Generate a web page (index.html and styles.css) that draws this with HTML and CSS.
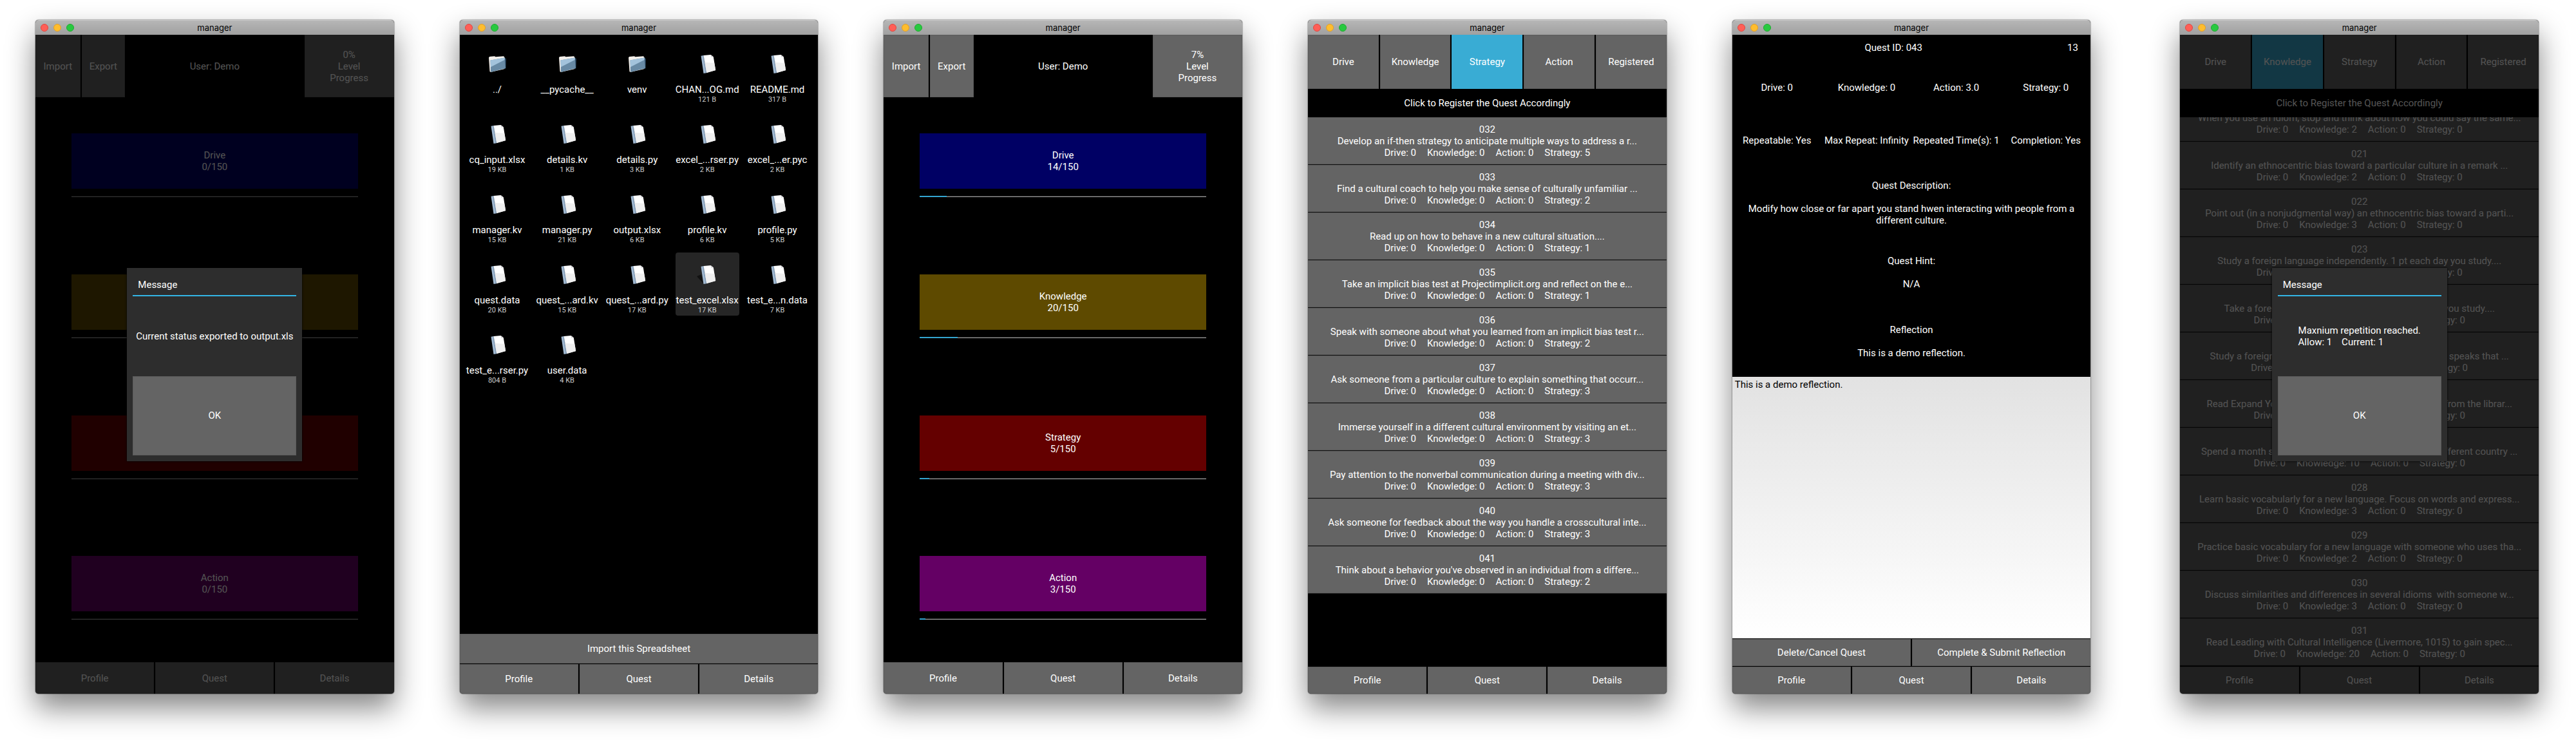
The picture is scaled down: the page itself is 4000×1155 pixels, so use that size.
FILE: index.html
```html
<!DOCTYPE html>
<html lang="en">
<head>
<meta charset="utf-8">
<title>manager</title>
<link rel="stylesheet" href="styles.css">
</head>
<body>
<svg width="0" height="0" class="sprites" aria-hidden="true">
  <symbol id="folder" viewBox="0 0 48 48">
    <path d="M11 14.5 12 13 20 12.2 21.5 13.2 34 12.2 35.5 14V32L14 37 12.5 36Z" fill="#f3efea"/>
    <path d="M34.5 14.5 38 16 37.5 31 34.5 32Z" fill="#24405a"/>
    <path d="M13.5 18.5 36 14.5 37 31 14 37Z" fill="#688aa5"/>
    <path d="M13.5 18.5 36 14.5 35.5 18 14 29Z" fill="#a3c3dc"/>
  </symbol>
  <symbol id="file" viewBox="0 0 48 48">
    <path d="M14.5 11.7 18.5 11 23.3 38 18.5 39Z" fill="#a3bbd3"/>
    <path d="M17 11.3 18.5 11 23.3 38 21.5 38.4Z" fill="#7f99b5"/>
    <path d="M18.5 11 29.5 10 33.8 13.3 37.2 34 23.3 38Z" fill="#fff"/>
    <path d="M20.4 21.7 35.2 23 37.2 34 23.3 38Z" fill="#efefef"/>
    <path d="M29.5 10 30.2 13.8 33.8 13.3Z" fill="#d5d5d8"/>
  </symbol>
</svg>
<main class="screens">

  <section class="window">
    <header class="titlebar"><span class="lights"><i></i><i></i><i></i></span><h1>manager</h1></header>
    <div class="body home">
      <div class="topbar">
        <button>Import</button>
        <button>Export</button>
        <p>User: Demo</p>
        <button>0%<br>Level<br>Progress</button>
      </div>
      <div class="meters">
        <div class="meter"><button class="drive">Drive<br>0/150</button><progress max="150" value="0" aria-label="Drive"></progress></div>
        <div class="meter"><button class="knowledge" aria-label="Knowledge 0/150"></button><progress max="150" value="0" aria-label="Knowledge"></progress></div>
        <div class="meter"><button class="strategy" aria-label="Strategy 0/150"></button><progress max="150" value="0" aria-label="Strategy"></progress></div>
        <div class="meter"><button class="action">Action<br>0/150</button><progress max="150" value="0" aria-label="Action"></progress></div>
      </div>
      <nav class="bar bar-tall"><button>Profile</button><button>Quest</button><button>Details</button></nav>
      <div class="overlay">
        <div class="dialog" role="dialog" aria-label="Message">
          <h2>Message</h2>
          <p>Current status exported to output.xls</p>
          <button>OK</button>
        </div>
      </div>
    </div>
  </section>

  <section class="window">
    <header class="titlebar"><span class="lights"><i></i><i></i><i></i></span><h1>manager</h1></header>
    <div class="body">
      <ul class="files">
        <li><svg><use href="#folder"/></svg><b>../</b></li>
        <li><svg><use href="#folder"/></svg><b>__pycache__</b></li>
        <li><svg><use href="#folder"/></svg><b>venv</b></li>
        <li><svg><use href="#file"/></svg><b>CHAN...OG.md</b><small>121 B</small></li>
        <li><svg><use href="#file"/></svg><b>README.md</b><small>317 B</small></li>
        <li><svg><use href="#file"/></svg><b>cq_input.xlsx</b><small>19 KB</small></li>
        <li><svg><use href="#file"/></svg><b>details.kv</b><small>1 KB</small></li>
        <li><svg><use href="#file"/></svg><b>details.py</b><small>3 KB</small></li>
        <li><svg><use href="#file"/></svg><b>excel_...rser.py</b><small>2 KB</small></li>
        <li><svg><use href="#file"/></svg><b>excel_...er.pyc</b><small>2 KB</small></li>
        <li><svg><use href="#file"/></svg><b>manager.kv</b><small>15 KB</small></li>
        <li><svg><use href="#file"/></svg><b>manager.py</b><small>21 KB</small></li>
        <li><svg><use href="#file"/></svg><b>output.xlsx</b><small>6 KB</small></li>
        <li><svg><use href="#file"/></svg><b>profile.kv</b><small>6 KB</small></li>
        <li><svg><use href="#file"/></svg><b>profile.py</b><small>5 KB</small></li>
        <li><svg><use href="#file"/></svg><b>quest.data</b><small>20 KB</small></li>
        <li><svg><use href="#file"/></svg><b>quest_...ard.kv</b><small>15 KB</small></li>
        <li><svg><use href="#file"/></svg><b>quest_...ard.py</b><small>17 KB</small></li>
        <li class="selected"><svg><path d="M8 27 15 24 18 38Z" fill="#111"/><use href="#file"/></svg><b>test_excel.xlsx</b><small>17 KB</small></li>
        <li><svg><use href="#file"/></svg><b>test_e...n.data</b><small>7 KB</small></li>
        <li><svg><use href="#file"/></svg><b>test_e...rser.py</b><small>804 B</small></li>
        <li><svg><use href="#file"/></svg><b>user.data</b><small>4 KB</small></li>
      </ul>
      <div class="bar bar-mid"><button>Import this Spreadsheet</button></div>
      <nav class="bar bar-mid"><button>Profile</button><button>Quest</button><button>Details</button></nav>
    </div>
  </section>

  <section class="window">
    <header class="titlebar"><span class="lights"><i></i><i></i><i></i></span><h1>manager</h1></header>
    <div class="body home">
      <div class="topbar">
        <button>Import</button>
        <button>Export</button>
        <p>User: Demo</p>
        <button>7%<br>Level<br>Progress</button>
      </div>
      <div class="meters">
        <div class="meter"><button class="drive">Drive<br>14/150</button><progress max="150" value="14" aria-label="Drive"></progress></div>
        <div class="meter"><button class="knowledge">Knowledge<br>20/150</button><progress max="150" value="20" aria-label="Knowledge"></progress></div>
        <div class="meter"><button class="strategy">Strategy<br>5/150</button><progress max="150" value="5" aria-label="Strategy"></progress></div>
        <div class="meter"><button class="action">Action<br>3/150</button><progress max="150" value="3" aria-label="Action"></progress></div>
      </div>
      <nav class="bar bar-tall"><button>Profile</button><button>Quest</button><button>Details</button></nav>
    </div>
  </section>

  <section class="window">
    <header class="titlebar"><span class="lights"><i></i><i></i><i></i></span><h1>manager</h1></header>
    <div class="body">
      <div class="bar tabs"><button>Drive</button><button>Knowledge</button><button class="active">Strategy</button><button>Action</button><button>Registered</button></div>
      <p class="prompt">Click to Register the Quest Accordingly</p>
      <div class="quests">
        <button><span>032</span><span>Develop an if-then strategy to anticipate multiple ways to address a r...</span><span class="points"><i>Drive: 0</i><i>Knowledge: 0</i><i>Action: 0</i><i>Strategy: 5</i></span></button>
        <button><span>033</span><span>Find a cultural coach to help you make sense of culturally unfamiliar ...</span><span class="points"><i>Drive: 0</i><i>Knowledge: 0</i><i>Action: 0</i><i>Strategy: 2</i></span></button>
        <button><span>034</span><span>Read up on how to behave in a new cultural situation....</span><span class="points"><i>Drive: 0</i><i>Knowledge: 0</i><i>Action: 0</i><i>Strategy: 1</i></span></button>
        <button><span>035</span><span>Take an implicit bias test at Projectimplicit.org and reflect on the e...</span><span class="points"><i>Drive: 0</i><i>Knowledge: 0</i><i>Action: 0</i><i>Strategy: 1</i></span></button>
        <button><span>036</span><span>Speak with someone about what you learned from an implicit bias test r...</span><span class="points"><i>Drive: 0</i><i>Knowledge: 0</i><i>Action: 0</i><i>Strategy: 2</i></span></button>
        <button><span>037</span><span>Ask someone from a particular culture to explain something that occurr...</span><span class="points"><i>Drive: 0</i><i>Knowledge: 0</i><i>Action: 0</i><i>Strategy: 3</i></span></button>
        <button><span>038</span><span>Immerse yourself in a different cultural environment by visiting an et...</span><span class="points"><i>Drive: 0</i><i>Knowledge: 0</i><i>Action: 0</i><i>Strategy: 3</i></span></button>
        <button><span>039</span><span>Pay attention to the nonverbal communication during a meeting with div...</span><span class="points"><i>Drive: 0</i><i>Knowledge: 0</i><i>Action: 0</i><i>Strategy: 3</i></span></button>
        <button><span>040</span><span>Ask someone for feedback about the way you handle a crosscultural inte...</span><span class="points"><i>Drive: 0</i><i>Knowledge: 0</i><i>Action: 0</i><i>Strategy: 3</i></span></button>
        <button><span>041</span><span>Think about a behavior you've observed in an individual from a differe...</span><span class="points"><i>Drive: 0</i><i>Knowledge: 0</i><i>Action: 0</i><i>Strategy: 2</i></span></button>
      </div>
      <nav class="bar"><button>Profile</button><button>Quest</button><button>Details</button></nav>
    </div>
  </section>

  <section class="window">
    <header class="titlebar"><span class="lights"><i></i><i></i><i></i></span><h1>manager</h1></header>
    <div class="body detail">
      <div class="quest-id"><p>Quest ID: 043</p><p>13</p></div>
      <div class="facts"><p>Drive: 0</p><p>Knowledge: 0</p><p>Action: 3.0</p><p>Strategy: 0</p></div>
      <div class="facts"><p>Repeatable: Yes</p><p>Max Repeat: Infinity</p><p>Repeated Time(s): 1</p><p>Completion: Yes</p></div>
      <div class="note"><h2>Quest Description:</h2><p>Modify how close or far apart you stand hwen interacting with people from a different culture.</p></div>
      <div class="note"><h2>Quest Hint:</h2><p>N/A</p></div>
      <div class="note"><h2><label for="reflection">Reflection</label></h2><p>This is a demo reflection.</p></div>
      <textarea id="reflection">This is a demo reflection.</textarea>
      <div class="bar"><button>Delete/Cancel Quest</button><button>Complete &amp; Submit Reflection</button></div>
      <nav class="bar"><button>Profile</button><button>Quest</button><button>Details</button></nav>
    </div>
  </section>

  <section class="window window-last">
    <header class="titlebar"><span class="lights"><i></i><i></i><i></i></span><h1>manager</h1></header>
    <div class="body">
      <div class="bar tabs"><button>Drive</button><button class="active">Knowledge</button><button>Strategy</button><button>Action</button><button>Registered</button></div>
      <p class="prompt">Click to Register the Quest Accordingly</p>
      <div class="quests quests-end">
        <button><span></span><span>When you use an idiom, stop and think about how you could say the same...</span><span class="points"><i>Drive: 0</i><i>Knowledge: 2</i><i>Action: 0</i><i>Strategy: 0</i></span></button>
        <button><span>021</span><span>Identify an ethnocentric bias toward a particular culture in a remark ...</span><span class="points"><i>Drive: 0</i><i>Knowledge: 2</i><i>Action: 0</i><i>Strategy: 0</i></span></button>
        <button><span>022</span><span>Point out (in a nonjudgmental way) an ethnocentric bias toward a parti...</span><span class="points"><i>Drive: 0</i><i>Knowledge: 3</i><i>Action: 0</i><i>Strategy: 0</i></span></button>
        <button><span>023</span><span>Study a foreign language independently. 1 pt each day you study....</span><span class="points"><i>Drive: 0</i><i>Knowledge: 1</i><i>Action: 0</i><i>Strategy: 0</i></span></button>
        <button><span></span><span>Take a foreign language class. 1 pt for each lesson you study....</span><span class="points"><i>Drive: 0</i><i>Knowledge: 10</i><i>Action: 0</i><i>Strategy: 0</i></span></button>
        <button><span></span><span>Study a foreign language with a friend who also fluently speaks that ...</span><span class="points"><i>Drive: 0</i><i>Knowledge: 100</i><i>Action: 0</i><i>Strategy: 0</i></span></button>
        <button><span></span><span>Read Expand Your Borders (Livermore, 2013). Borrow it from the librar...</span><span class="points"><i>Drive: 0</i><i>Knowledge: 10</i><i>Action: 0</i><i>Strategy: 0</i></span></button>
        <button><span></span><span>Spend a month studying or working and living fully in a different country ...</span><span class="points"><i>Drive: 0</i><i>Knowledge: 10</i><i>Action: 0</i><i>Strategy: 0</i></span></button>
        <button><span>028</span><span>Learn basic vocabularly for a new language. Focus on words and express...</span><span class="points"><i>Drive: 0</i><i>Knowledge: 3</i><i>Action: 0</i><i>Strategy: 0</i></span></button>
        <button><span>029</span><span>Practice basic vocabulary for a new language with someone who uses tha...</span><span class="points"><i>Drive: 0</i><i>Knowledge: 2</i><i>Action: 0</i><i>Strategy: 0</i></span></button>
        <button><span>030</span><span>Discuss similarities and differences in several idioms  with someone w...</span><span class="points"><i>Drive: 0</i><i>Knowledge: 3</i><i>Action: 0</i><i>Strategy: 0</i></span></button>
        <button><span>031</span><span>Read Leading with Cultural Intelligence (Livermore, 1015) to gain spec...</span><span class="points"><i>Drive: 0</i><i>Knowledge: 20</i><i>Action: 0</i><i>Strategy: 0</i></span></button>
      </div>
      <nav class="bar"><button>Profile</button><button>Quest</button><button>Details</button></nav>
      <div class="overlay">
        <div class="dialog" role="dialog" aria-label="Message">
          <h2>Message</h2>
          <p><span>Maxnium repetition reached.
Allow: 1    Current: 1</span></p>
          <button>OK</button>
        </div>
      </div>
    </div>
  </section>

</main>
</body>
</html>
```
FILE: styles.css
```css
* {
  box-sizing: border-box;
  margin: 0;
  padding: 0;
}

body {
  background: #fff;
  color: #fff;
  font: 15px/18px Roboto, "Liberation Sans", sans-serif;
}

h1, h2, b, i, small, button, textarea {
  font: inherit;
  color: inherit;
}

i, b, small {
  display: block;
}

.sprites {
  position: absolute;
}

.screens {
  display: flex;
  gap: 102px;
  min-height: 100vh;
  padding: 31px 58px 78px 55px;
}

/* Window frame */
.window {
  flex: 1 1 0;
  min-width: 0;
  display: flex;
  flex-direction: column;
  border-radius: 5px;
  overflow: hidden;
  background: #000;
  box-shadow: 0 0 1px 1px rgba(0, 0, 0, .25), 0 22px 45px rgba(0, 0, 0, .48);
}

.window-last {
  margin-left: 37px;
}

.titlebar {
  display: grid;
  grid-template-columns: 1fr auto 1fr;
  align-items: center;
  height: 23px;
  padding: 0 8px;
  background: linear-gradient(#b6b6b6, #a0a0a0);
  border-top: 1px solid #c9c9c9;
}

.titlebar h1 {
  color: #000;
  font: 13px/18px Inter, "Liberation Sans", sans-serif;
}

.lights {
  display: flex;
  gap: 8px;
}

.lights i {
  width: 12px;
  height: 12px;
  border-radius: 50%;
  background: #ff5f57;
  border: 1px solid #e2463f;
}

.lights i:nth-child(2) {
  background: #ffbd2e;
  border-color: #e0a028;
}

.lights i:nth-child(3) {
  background: #28c940;
  border-color: #1eac2f;
}

.body {
  position: relative;
  flex: 1;
  display: flex;
  flex-direction: column;
  gap: 1px;
  min-height: 0;
}

/* Buttons and bars */
button {
  border: 0;
  background: #646464;
  box-shadow: inset 0 0 0 1px #5a5a5a;
  text-align: center;
}

.bar {
  flex: none;
  display: flex;
  gap: 2px;
  height: 42px;
}

.bar button {
  flex: 1 1 0;
}

.bar-mid {
  height: 46px;
}

.bar-tall {
  height: 49px;
}

.tabs {
  height: 84px;
}

.active {
  background: #39acd4;
  box-shadow: none;
}

.prompt {
  flex: none;
  height: 42px;
  line-height: 42px;
  text-align: center;
}

/* Home screen */
.topbar {
  flex: none;
  display: grid;
  grid-template-columns: 1fr 1fr 4fr 2fr;
  height: 97px;
}

.topbar button:nth-child(2) {
  border-left: 2px solid #000;
}

.topbar p {
  align-self: center;
  text-align: center;
}

.meters {
  flex: 1;
  display: grid;
  grid-template-rows: repeat(4, 1fr);
}

.meter {
  display: flex;
  flex-direction: column;
  gap: 11px;
  padding: 55px 10% 0;
}

.meter button {
  height: 86px;
  box-shadow: none;
}

.meter .drive {
  background: #000064;
}

.meter .knowledge {
  background: #5e4a00;
}

.meter .strategy {
  background: #640000;
}

.meter .action {
  background: #640064;
}

progress {
  display: block;
  appearance: none;
  width: 100%;
  height: 2px;
  border: 0;
}

progress::-webkit-progress-bar {
  background: linear-gradient(#333 50%, #999 50%);
}

progress::-webkit-progress-value {
  background: #33a5cf;
}

/* File chooser */
.files {
  flex: 1;
  display: grid;
  grid-template-columns: repeat(5, 1fr);
  grid-auto-rows: 98px;
  gap: 11px 10px;
  padding: 11px 14px 0 9px;
  list-style: none;
}

.files li {
  display: flex;
  flex-direction: column;
  align-items: center;
  padding-top: 10px;
  border-radius: 4px;
  white-space: nowrap;
}

.files svg {
  width: 48px;
  height: 48px;
  margin-bottom: 7px;
}

.files small {
  color: #ccc;
  font-size: 11px;
  line-height: 14px;
}

.selected {
  background: #262626;
}

/* Quest list */
.quests {
  flex: 1 1 0;
  min-height: 0;
  display: flex;
  flex-direction: column;
  overflow: hidden;
}

.quests-end {
  justify-content: flex-end;
}

.quests button {
  flex: none;
  display: grid;
  grid-template-rows: repeat(3, 18px);
  justify-items: center;
  align-content: center;
  height: 74px;
  border-bottom: 1px solid #111;
  white-space: pre;
}

.points {
  display: flex;
  gap: 17px;
}

/* Quest detail */
.detail {
  display: grid;
  grid-template-columns: minmax(0, 1fr);
  grid-template-rows: 41fr 81fr 82fr 112fr 105fr 109fr 409fr auto auto;
}

.quest-id,
.facts {
  display: grid;
  align-items: center;
  text-align: center;
}

.quest-id {
  grid-template-columns: 9fr 1fr;
}

.facts {
  grid-template-columns: repeat(4, 1fr);
  white-space: nowrap;
}

.note {
  display: flex;
  flex-direction: column;
  justify-content: center;
  gap: 18px;
  padding: 0 24px;
  text-align: center;
}

textarea {
  display: block;
  width: 100%;
  padding: 3px 4px;
  border: 0;
  resize: none;
  color: #000;
  background: linear-gradient(#e2e2e2, #fff);
}

/* Message dialog */
.overlay {
  position: absolute;
  inset: 0;
  display: flex;
  align-items: center;
  justify-content: center;
  background: rgba(0, 0, 0, .68);
}

.dialog {
  display: flex;
  flex-direction: column;
  width: 272px;
  height: 300px;
  padding: 9px;
  background: #2d2d2d;
  box-shadow: 0 0 3px #000;
}

.dialog h2 {
  height: 35px;
  padding: 8px;
  border-bottom: 2px solid #33b5e5;
}

.dialog p {
  flex: 1;
  display: flex;
  align-items: center;
  justify-content: center;
  white-space: pre;
}

.dialog button {
  height: 123px;
}
```
